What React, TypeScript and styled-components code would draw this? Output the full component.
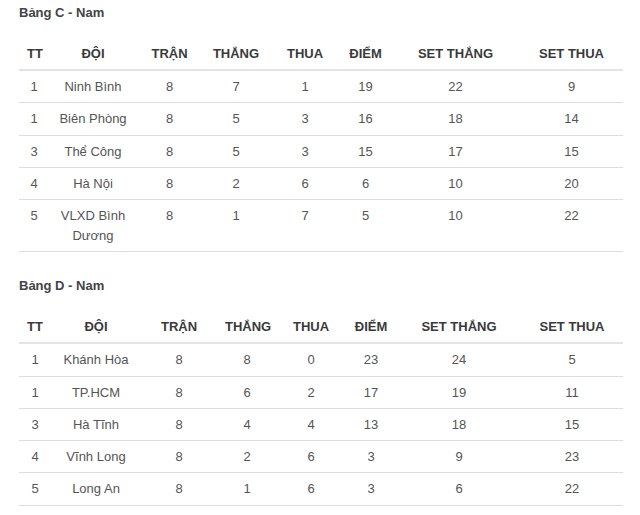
import React from "react";
import styled, { createGlobalStyle } from "styled-components";

const Global = createGlobalStyle`
  html, body { margin: 0; padding: 0; background: #ffffff; }
  body { font-family: "Liberation Sans", Arial, sans-serif; }
`;

const Page = styled.div`
  padding: 3px 17px 0 19px;
  width: 604px;
`;

const Section = styled.section<{ $gap: number }>`
  margin-bottom: ${(p) => p.$gap}px;
`;

const Title = styled.h3`
  margin: 0 0 15px 0;
  font-size: 13px;
  line-height: 20px;
  font-weight: 700;
  color: #444444;
`;

const Table = styled.table`
  width: 604px;
  border-collapse: collapse;
  table-layout: fixed;
`;

const Th = styled.th`
  padding: 6px 8px 5px;
  font-size: 13px;
  line-height: 20px;
  font-weight: 700;
  color: #3a3a3a;
  text-align: center;
  border-bottom: 2px solid #e4e4e4;
  white-space: nowrap;
`;

const Td = styled.td`
  padding: 6px 8px 5.25px;
  font-size: 13px;
  line-height: 20px;
  color: #555555;
  text-align: center;
  vertical-align: top;
  border-bottom: 1px solid #dddddd;
`;

type Row = [string, string, number, number, number, number, number, number];

const headers = ["TT", "ĐỘI", "TRẬN", "THẮNG", "THUA", "ĐIỂM", "SET THẮNG", "SET THUA"];

const groupC: Row[] = [
  ["1", "Ninh Bình", 8, 7, 1, 19, 22, 9],
  ["1", "Biên Phòng", 8, 5, 3, 16, 18, 14],
  ["3", "Thể Công", 8, 5, 3, 15, 17, 15],
  ["4", "Hà Nội", 8, 2, 6, 6, 10, 20],
  ["5", "VLXD Bình Dương", 8, 1, 7, 5, 10, 22],
];

const groupD: Row[] = [
  ["1", "Khánh Hòa", 8, 8, 0, 23, 24, 5],
  ["1", "TP.HCM", 8, 6, 2, 17, 19, 11],
  ["3", "Hà Tĩnh", 8, 4, 4, 13, 18, 15],
  ["4", "Vĩnh Long", 8, 2, 6, 3, 9, 23],
  ["5", "Long An", 8, 1, 6, 3, 6, 22],
];

const StandingTable: React.FC<{ title: string; rows: Row[]; widths: number[]; gap: number }> = ({
  title,
  rows,
  widths,
  gap,
}) => (
  <Section $gap={gap}>
    <Title>{title}</Title>
    <Table>
      <colgroup>
        {widths.map((w, i) => (
          <col key={i} style={{ width: w }} />
        ))}
      </colgroup>
      <thead>
        <tr>
          {headers.map((h) => (
            <Th key={h}>{h}</Th>
          ))}
        </tr>
      </thead>
      <tbody>
        {rows.map((r, i) => (
          <tr key={i}>
            {r.map((c, j) => (
              <Td key={j}>{c}</Td>
            ))}
          </tr>
        ))}
      </tbody>
    </Table>
  </Section>
);

export default function App() {
  return (
    <>
      <Global />
      <Page>
        <StandingTable
          title="Bảng C - Nam"
          rows={groupC}
          widths={[30, 88, 65, 68, 70, 51, 129, 103]}
          gap={24}
        />
        <StandingTable
          title="Bảng D - Nam"
          rows={groupD}
          widths={[32, 90, 76, 60, 68, 52, 124, 102]}
          gap={0}
        />
      </Page>
    </>
  );
}
